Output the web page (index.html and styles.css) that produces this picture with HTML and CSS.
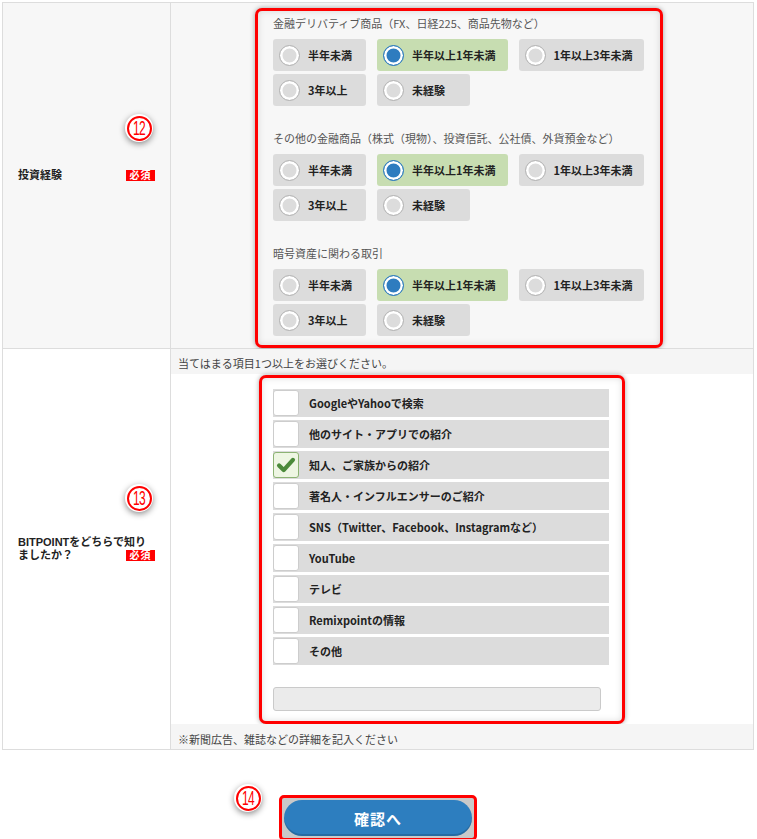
FILE: index.html
```html
<!DOCTYPE html>
<html lang="ja">
<head>
<meta charset="utf-8">
<title>投資経験</title>
<link rel="stylesheet" href="styles.css">
</head>
<body>
<div class="page">
  <div class="form-table">
    <div class="row row-exp">
      <div class="th">
        <span class="marker marker-12"><span class="marker-ring"><span class="marker-num">12</span></span></span>
        <div class="label"><span class="label-line">投資経験<span class="req">必須</span></span></div>
      </div>
      <div class="td td-exp">
        <div class="callout callout-exp">
          <div class="group">
            <p class="group-title">金融デリバティブ商品（FX、日経225、商品先物など）</p>
            <div class="options">
              <label class="opt"><span class="radio"></span>半年未満</label>
              <label class="opt is-on"><span class="radio"></span>半年以上1年未満</label>
              <label class="opt"><span class="radio"></span>1年以上3年未満</label>
              <label class="opt"><span class="radio"></span>3年以上</label>
              <label class="opt"><span class="radio"></span>未経験</label>
            </div>
          </div>
          <div class="group">
            <p class="group-title">その他の金融商品（株式（現物）、投資信託、公社債、外貨預金など）</p>
            <div class="options">
              <label class="opt"><span class="radio"></span>半年未満</label>
              <label class="opt is-on"><span class="radio"></span>半年以上1年未満</label>
              <label class="opt"><span class="radio"></span>1年以上3年未満</label>
              <label class="opt"><span class="radio"></span>3年以上</label>
              <label class="opt"><span class="radio"></span>未経験</label>
            </div>
          </div>
          <div class="group">
            <p class="group-title">暗号資産に関わる取引</p>
            <div class="options">
              <label class="opt"><span class="radio"></span>半年未満</label>
              <label class="opt is-on"><span class="radio"></span>半年以上1年未満</label>
              <label class="opt"><span class="radio"></span>1年以上3年未満</label>
              <label class="opt"><span class="radio"></span>3年以上</label>
              <label class="opt"><span class="radio"></span>未経験</label>
            </div>
          </div>
        </div>
      </div>
    </div>
    <div class="row row-src">
      <div class="th">
        <span class="marker marker-13"><span class="marker-ring"><span class="marker-num">13</span></span></span>
        <div class="label">
          <span class="label-line">BITPOINTをどちらで知り</span>
          <span class="label-line">ましたか？<span class="req">必須</span></span>
        </div>
      </div>
      <div class="td td-src">
        <p class="note note-top">当てはまる項目1つ以上をお選びください。</p>
        <div class="callout callout-src">
          <ul class="checks">
            <li class="check"><span class="box"></span>GoogleやYahooで検索</li>
            <li class="check"><span class="box"></span>他のサイト・アプリでの紹介</li>
            <li class="check is-on"><span class="box"><svg viewBox="0 0 26 26" width="24" height="24"><path d="M5.5 13.5 L10.5 18.5 L20.5 7.5" fill="none" stroke="#4b8a3a" stroke-width="4.6" stroke-linecap="round" stroke-linejoin="round"/></svg></span>知人、ご家族からの紹介</li>
            <li class="check"><span class="box"></span>著名人・インフルエンサーのご紹介</li>
            <li class="check"><span class="box"></span>SNS（Twitter、Facebook、Instagramなど）</li>
            <li class="check"><span class="box"></span>YouTube</li>
            <li class="check"><span class="box"></span>テレビ</li>
            <li class="check"><span class="box"></span>Remixpointの情報</li>
            <li class="check"><span class="box"></span>その他</li>
          </ul>
          <div class="text-input"></div>
        </div>
        <p class="note note-bottom">※新聞広告、雑誌などの詳細を記入ください</p>
      </div>
    </div>
  </div>
  <div class="submit-area">
    <div class="btn-frame">
      <span class="marker marker-14"><span class="marker-ring"><span class="marker-num">14</span></span></span>
      <button class="btn-confirm" type="button">確認へ</button>
    </div>
  </div>
</div>
</body>
</html>
```
FILE: styles.css
```css
* {
  box-sizing: border-box;
  margin: 0;
  padding: 0;
}

body {
  margin: 0;
  background: #fff;
  font-family: "Noto Sans CJK JP", "Noto Sans", sans-serif;
  font-size: 11px;
  color: #222;
}

.page {
  padding: 2px 3px 0 2px;
  height: 839px;
  overflow: hidden;
}

.form-table {
  border: 1px solid #ddd;
  border-bottom: none;
}

.row {
  display: flex;
  border-bottom: 1px solid #ddd;
}

.th {
  position: relative;
  flex: none;
  width: 168px;
  border-right: 1px solid #ddd;
  display: flex;
  align-items: center;
  padding-left: 15px;
}

.td {
  flex: 1;
  min-width: 0;
}

.row-exp .th,
.row-exp .td {
  background: #f7f7f7;
}

.label {
  width: 137px;
  display: flex;
  flex-direction: column;
  font-family: "Liberation Sans", "Noto Sans CJK JP", sans-serif;
  font-weight: bold;
  line-height: 13px;
  color: #222;
}

.label-line {
  display: flex;
  justify-content: space-between;
  align-items: center;
  height: 13px;
  white-space: nowrap;
}

.req {
  width: 29px;
  height: 11px;
  background: #f00;
  color: #fff;
  font-size: 10px;
  line-height: 11px;
  text-align: center;
  letter-spacing: 1px;
}

/* annotation markers */
.marker {
  position: absolute;
  width: 28px;
  height: 28px;
  border-radius: 50%;
  background: #fff;
  box-shadow: 0 2px 6px rgba(0, 0, 0, 0.45);
  display: flex;
  align-items: center;
  justify-content: center;
}

.marker-12 { left: 122px; top: 111px; }
.marker-13 { left: 122px; top: 135px; }
.marker-14 { left: -48px; top: -14px; }

.marker-ring {
  width: 25px;
  height: 25px;
  border: 2px solid #f00;
  border-radius: 50%;
  display: flex;
  align-items: center;
  justify-content: center;
  color: #f00;
  font-family: "Liberation Sans", sans-serif;
  font-size: 20px;
}

.marker-num {
  display: block;
  line-height: 1;
  transform: scaleX(0.6);
  letter-spacing: -1px;
}

/* red callouts */
.callout {
  border: 3px solid #f00;
  border-radius: 7px;
  box-shadow: 0 0 5px rgba(0, 0, 0, 0.35), inset 0 0 7px rgba(0, 0, 0, 0.13);
}

.td-exp {
  padding-top: 5px;
}

.callout-exp {
  margin-left: 84px;
  width: 408px;
  padding: 4px 8px 9px 15px;
  background: #f7f7f7;
}

.group + .group {
  margin-top: 24px;
}

.group-title {
  line-height: 16px;
  color: #555;
  margin-bottom: 8px;
}

.options {
  display: flex;
  flex-wrap: wrap;
  gap: 3px 11px;
}

.opt {
  display: flex;
  align-items: center;
  gap: 8px;
  height: 32px;
  min-width: 93px;
  padding: 0 12px 0 6px;
  background: #dcdcdc;
  border-radius: 3px;
  font-weight: bold;
  color: #222;
}

.radio {
  width: 21px;
  height: 21px;
  border-radius: 50%;
  border: 1px solid #b4b4b4;
  background: #dcdcdc;
  box-shadow: inset 0 0 0 2.5px #fff;
}

.opt.is-on {
  background: #c7ddb1;
}

.opt.is-on .radio {
  border-color: #2e7cbf;
  background: #2e7cbf;
}

/* source row */
.row-src .th,
.row-src .td {
  background: #fff;
}

.note {
  background: #f5f5f5;
  color: #444;
  line-height: 16px;
  padding: 6px 7px 3px;
}

.note-bottom {
  padding: 7px 7px 2px;
}

.callout-src {
  margin: 1px 0 0 88px;
  width: 366px;
  padding: 11px 13px 10px 11px;
  background: #fff;
}

.checks {
  list-style: none;
  display: flex;
  flex-direction: column;
  gap: 3px;
}

.check {
  display: flex;
  align-items: center;
  height: 28px;
  background: #dcdcdc;
  font-weight: bold;
  color: #222;
}

.box {
  width: 26px;
  height: 26px;
  margin-right: 10px;
  background: #fff;
  border: 1px solid #cdcdcd;
  border-radius: 3px;
  display: flex;
  align-items: center;
  justify-content: center;
}

.check.is-on .box {
  background: #eef6e3;
  border-color: #8db374;
}

.text-input {
  margin-top: 22px;
  width: 328px;
  height: 24px;
  background: #ebebeb;
  border: 1px solid #cacaca;
  border-radius: 3px;
}

/* submit */
.submit-area {
  display: flex;
  justify-content: center;
  margin-top: 45px;
}

.btn-frame {
  position: relative;
  width: 198px;
  padding: 2px;
  border: 3px solid #f00;
  border-radius: 5px;
  background: #c9c9c9;
}

.btn-confirm {
  display: block;
  width: 188px;
  height: 36px;
  border: none;
  border-radius: 18px;
  background: #2d7ebf;
  box-shadow: inset 0 -2px 0 rgba(0, 0, 0, 0.15);
  color: #fff;
  font-family: "Noto Sans CJK JP", sans-serif;
  font-size: 15px;
  font-weight: bold;
  letter-spacing: 1px;
}
```
